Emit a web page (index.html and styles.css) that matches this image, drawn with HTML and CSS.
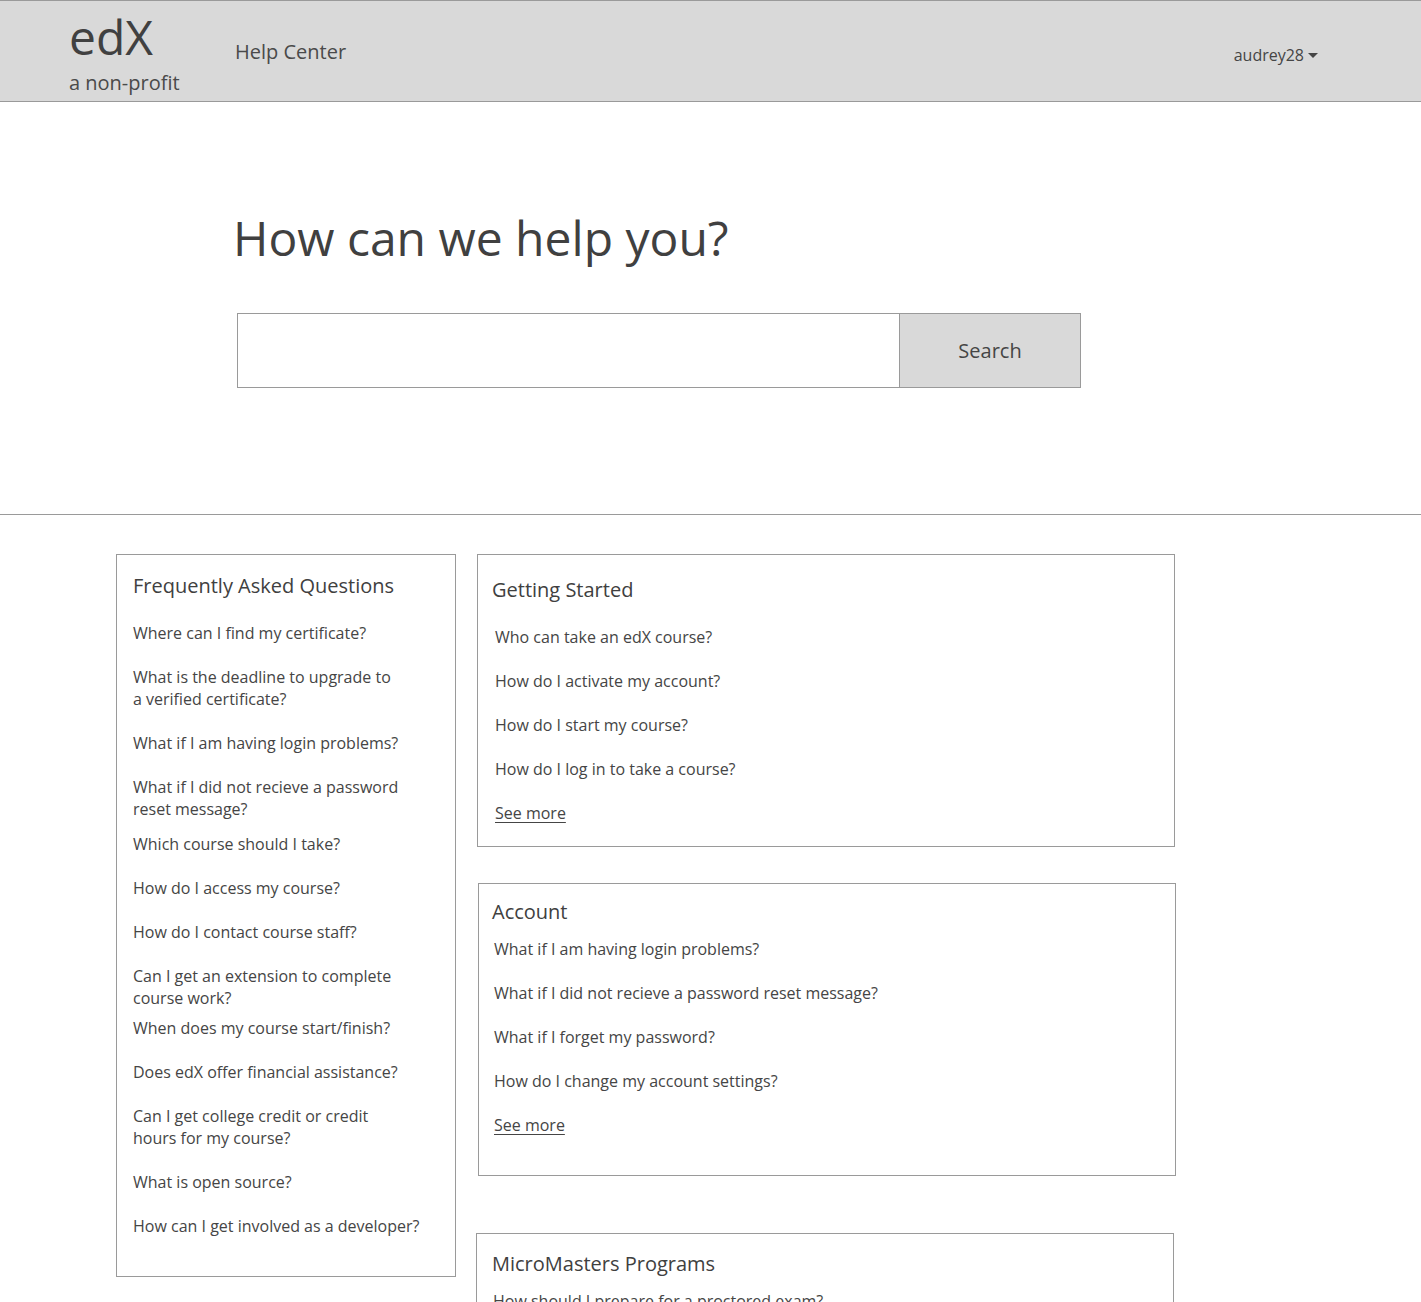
FILE: index.html
```html
<!DOCTYPE html>
<html lang="en">
<head>
<meta charset="utf-8">
<title>edX Help Center</title>
<link rel="stylesheet" href="styles.css">
</head>
<body>
<header class="topbar">
  <div class="brand">
    <div class="brand-name">edX</div>
    <div class="brand-sub">a non-profit</div>
  </div>
  <div class="help-center">Help Center</div>
  <div class="user">audrey28 <span class="caret"></span></div>
</header>

<section class="hero">
  <h1 class="hero-title">How can we help you?</h1>
  <form class="search">
    <input class="search-input" type="text" aria-label="Search">
    <button class="search-btn" type="button">Search</button>
  </form>
</section>

<main class="content">
  <aside class="card faq">
    <h2 class="card-title faq-title">Frequently Asked Questions</h2>
    <ul class="faq-list">
      <li class="faq-item">Where can I find my certificate?</li>
      <li class="faq-item">What is the deadline to upgrade to<br>a verified certificate?</li>
      <li class="faq-item">What if I am having login problems?</li>
      <li class="faq-item tight">What if I did not recieve a password<br>reset message?</li>
      <li class="faq-item">Which course should I take?</li>
      <li class="faq-item">How do I access my course?</li>
      <li class="faq-item">How do I contact course staff?</li>
      <li class="faq-item tighter">Can I get an extension to complete<br>course work?</li>
      <li class="faq-item">When does my course start/finish?</li>
      <li class="faq-item">Does edX offer financial assistance?</li>
      <li class="faq-item">Can I get college credit or credit<br>hours for my course?</li>
      <li class="faq-item">What is open source?</li>
      <li class="faq-item last">How can I get involved as a developer?</li>
    </ul>
  </aside>

  <div class="topics">
    <section class="card topic topic-start">
      <h2 class="card-title">Getting Started</h2>
      <ul class="topic-list">
        <li>Who can take an edX course?</li>
        <li>How do I activate my account?</li>
        <li>How do I start my course?</li>
        <li>How do I log in to take a course?</li>
        <li><a class="see-more" href="#">See more</a></li>
      </ul>
    </section>

    <section class="card topic topic-account">
      <h2 class="card-title">Account</h2>
      <ul class="topic-list">
        <li>What if I am having login problems?</li>
        <li>What if I did not recieve a password reset message?</li>
        <li>What if I forget my password?</li>
        <li>How do I change my account settings?</li>
        <li><a class="see-more" href="#">See more</a></li>
      </ul>
    </section>

    <section class="card topic topic-mm">
      <h2 class="card-title">MicroMasters Programs</h2>
      <ul class="topic-list">
        <li>How should I prepare for a proctored exam?</li>
        <li>What is a MicroMasters program?</li>
        <li>How do I enroll in a MicroMasters program?</li>
      </ul>
    </section>
  </div>
</main>
</body>
</html>
```

FILE: styles.css
```css
* { box-sizing: border-box; }

html, body {
  margin: 0;
  padding: 0;
  background: #fff;
}

body {
  font-family: "Open Sans", "Noto Sans", sans-serif;
  color: #454545;
}

/* Header */
.topbar {
  display: flex;
  align-items: flex-start;
  height: 102px;
  background: #d9d9d9;
  border-top: 1px solid #9a9a9a;
  border-bottom: 1px solid #9a9a9a;
  padding-left: 69px;
}

.brand {
  width: 166px;
  padding-top: 7px;
}

.brand-name {
  font-size: 48px;
  line-height: 58px;
  font-weight: 400;
  color: #404040;
}

.brand-sub {
  margin-top: 4px;
  font-size: 20px;
  line-height: 26px;
  color: #4a4a4a;
}

.help-center {
  font-size: 20px;
  line-height: 28px;
  margin-top: 37px;
  color: #4a4a4a;
}

.user {
  margin-left: auto;
  margin-right: 103px;
  margin-top: 43px;
  font-size: 16px;
  line-height: 22px;
  color: #454545;
  display: flex;
  align-items: center;
}

.caret {
  display: inline-block;
  width: 0;
  height: 0;
  margin-left: 4px;
  border-left: 5px solid transparent;
  border-right: 5px solid transparent;
  border-top: 5px solid #454545;
}

/* Hero */
.hero {
  padding: 105px 0 0 233px;
  height: 413px;
  border-bottom: 1px solid #9a9a9a;
}

.hero-title {
  margin: 0;
  font-size: 48px;
  line-height: 62px;
  font-weight: 400;
  color: #404040;
}

.search {
  display: flex;
  margin: 44px 0 0 4px;
  width: 844px;
  height: 75px;
}

.search-input {
  flex: 1;
  height: 75px;
  border: 1px solid #9a9a9a;
  border-right: none;
  margin: 0;
  padding: 0 12px;
  font: inherit;
  outline: none;
}

.search-btn {
  width: 182px;
  height: 75px;
  margin: 0;
  background: #d9d9d9;
  border: 1px solid #9a9a9a;
  font-family: "Open Sans", "Noto Sans", sans-serif;
  font-size: 20px;
  color: #454545;
  cursor: pointer;
}

/* Content */
.content {
  display: flex;
  align-items: flex-start;
  gap: 21px;
  padding: 39px 0 0 116px;
}

.card {
  border: 1px solid #9a9a9a;
  background: #fff;
}

.card-title {
  margin: 0;
  font-size: 20px;
  line-height: 28px;
  font-weight: 400;
  color: #404040;
}

ul {
  list-style: none;
  margin: 0;
  padding: 0;
}

.faq {
  width: 340px;
  height: 723px;
  padding: 17px 16px 0;
}

.faq-list {
  margin-top: 22px;
}

.faq-item {
  font-size: 16px;
  line-height: 22px;
  margin-bottom: 22px;
}

.faq-item.tight { margin-bottom: 13px; }
.faq-item.tighter { margin-bottom: 8px; }
.faq-item.last { margin-bottom: 0; }

.topics {
  display: flex;
  flex-direction: column;
  width: 699px;
}

.topic {
  width: 698px;
}

.topic-list li {
  font-size: 16px;
  line-height: 22px;
  margin-bottom: 22px;
}

.topic-list li:last-child { margin-bottom: 0; }

.topic-start {
  height: 293px;
  padding: 21px 14px 0 14px;
}

.topic-start .topic-list {
  margin-top: 22px;
  padding-left: 3px;
}

.topic-account {
  margin-top: 36px;
  margin-left: 1px;
  height: 293px;
  padding: 14px 14px 0 13px;
}

.topic-account .topic-list {
  margin-top: 12px;
  padding-left: 2px;
}

.topic-mm {
  margin-top: 57px;
  margin-left: -1px;
  padding: 16px 14px 30px 15px;
}

.topic-mm .topic-list {
  margin-top: 12px;
  padding-left: 1px;
}

.see-more {
  color: #454545;
  text-decoration: underline;
  text-underline-offset: 3px;
}
```
